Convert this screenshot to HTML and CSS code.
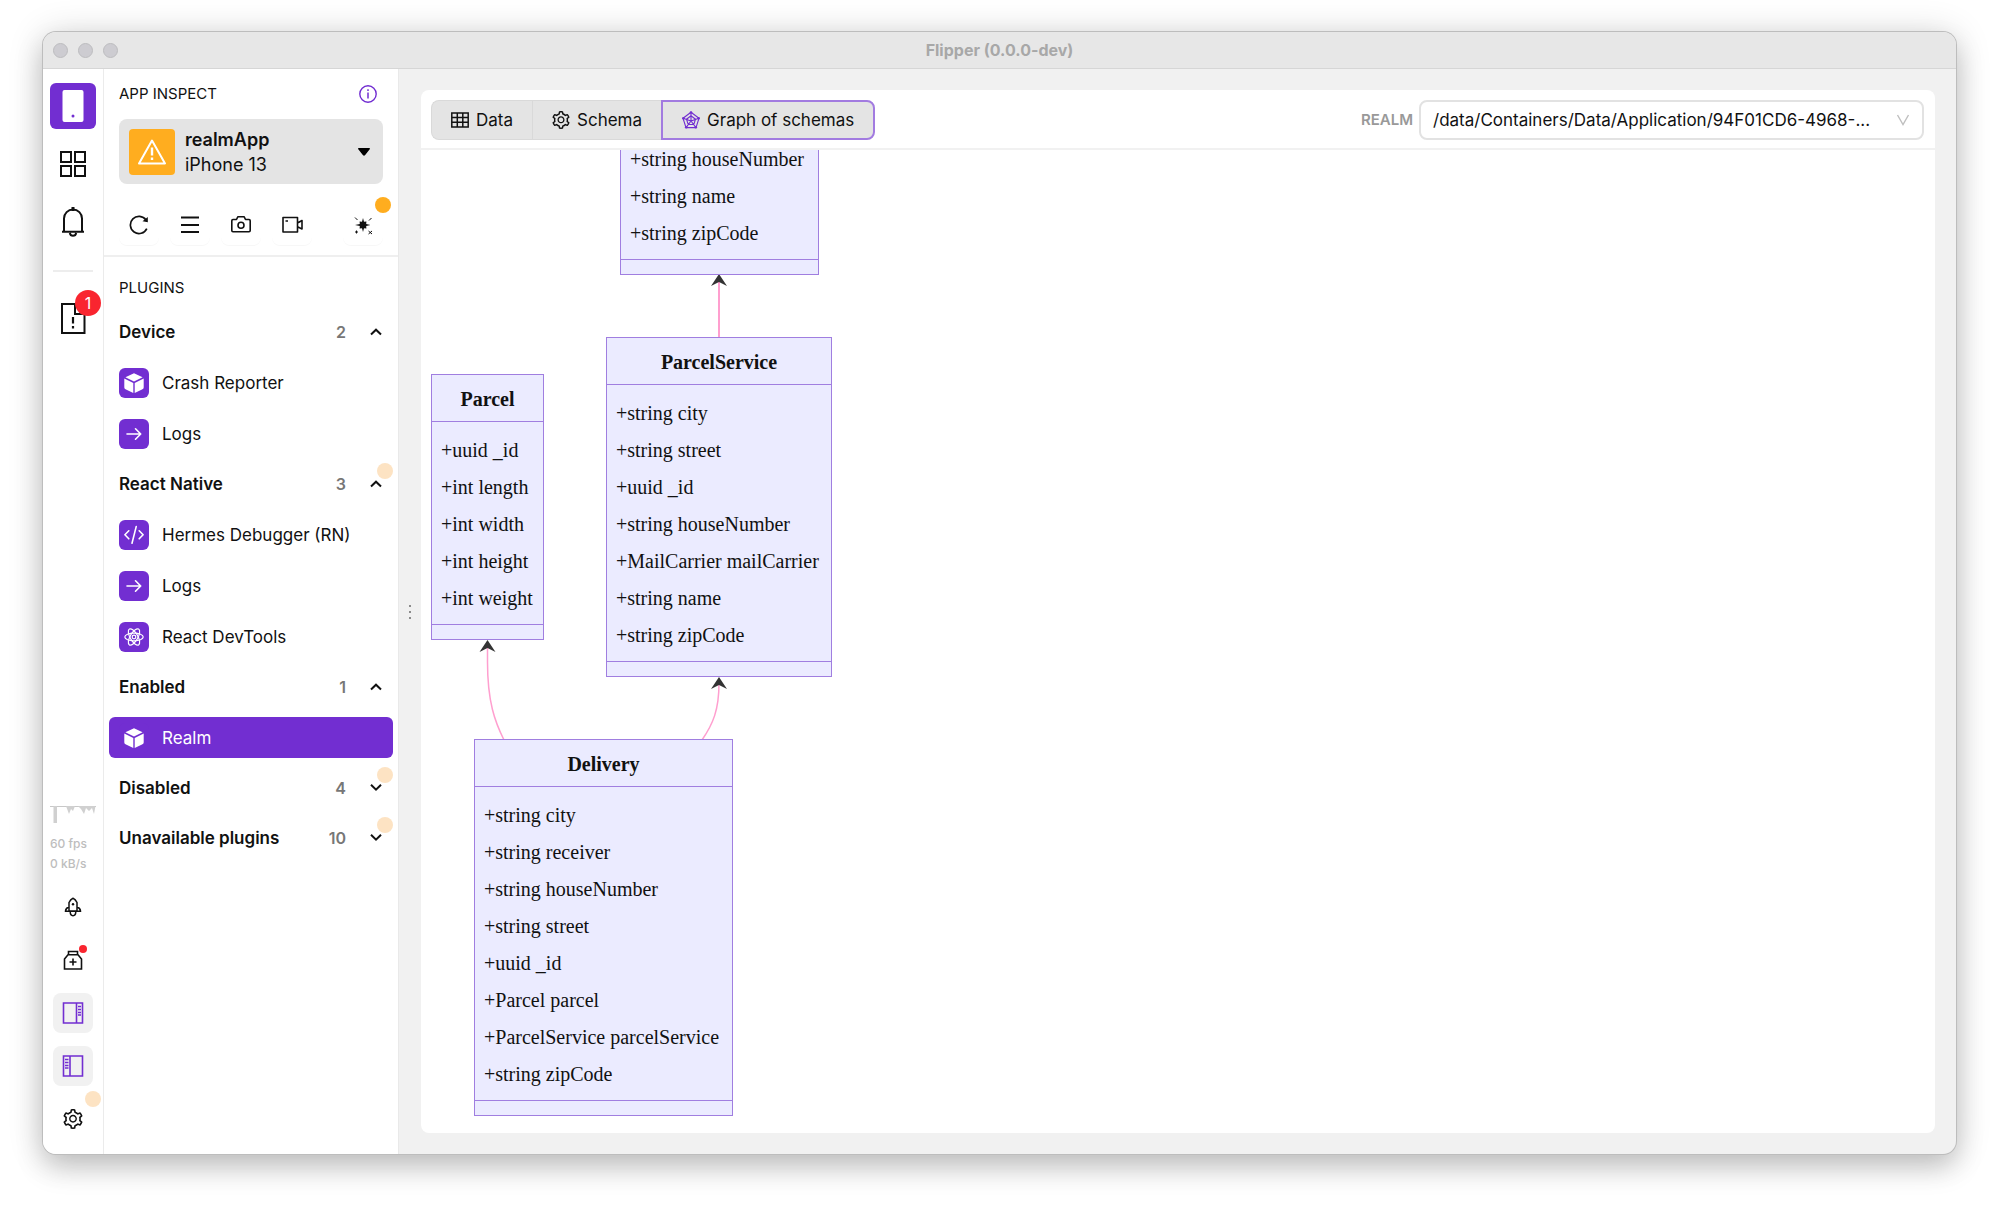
FILE: index.html
```html
<!DOCTYPE html>
<html lang="en">
<head>
<meta charset="utf-8">
<title>Flipper (0.0.0-dev)</title>
<link rel="stylesheet" href="styles.css">
</head>
<body>
<svg class="defs" aria-hidden="true">
  <symbol id="gear" viewBox="64 64 896 896"><path fill="currentColor" d="M924.8 625.7l-65.5-56c3.1-19 4.7-38.4 4.7-57.8s-1.6-38.8-4.7-57.8l65.5-56a32.03 32.03 0 009.3-35.2l-.9-2.6a443.74 443.74 0 00-79.7-137.9l-1.8-2.1a32.12 32.12 0 00-35.1-9.5l-81.3 28.9c-30-24.6-63.5-44-99.7-57.6l-15.7-85a32.05 32.05 0 00-25.8-25.7l-2.7-.5c-52.1-9.4-106.9-9.4-159 0l-2.7.5a32.05 32.05 0 00-25.8 25.7l-15.8 85.4a351.86 351.86 0 00-99 57.4l-81.9-29.1a32 32 0 00-35.1 9.5l-1.8 2.1a446.02 446.02 0 00-79.7 137.9l-.9 2.6c-4.5 12.5-.8 26.5 9.3 35.2l66.3 56.6c-3.1 18.8-4.6 38-4.6 57.1 0 19.2 1.5 38.4 4.6 57.1L99 625.5a32.03 32.03 0 00-9.3 35.2l.9 2.6c18.1 50.4 44.9 96.9 79.7 137.9l1.8 2.1a32.12 32.12 0 0035.1 9.5l81.9-29.1c29.8 24.5 63.1 43.9 99 57.4l15.8 85.4a32.05 32.05 0 0025.8 25.7l2.7.5a449.4 449.4 0 00159 0l2.7-.5a32.05 32.05 0 0025.8-25.7l15.7-85a350 350 0 0099.7-57.6l81.3 28.9a32 32 0 0035.1-9.5l1.8-2.1c34.8-41.1 61.6-87.5 79.7-137.9l.9-2.6c4.5-12.3.8-26.3-9.3-35zM788.3 465.9c2.5 15.1 3.8 30.6 3.8 46.1s-1.3 31-3.8 46.1l-6.6 40.1 74.7 63.9a370.03 370.03 0 01-42.6 73.6L721 702.8l-31.4 25.8c-23.9 19.6-50.5 35-79.3 45.8l-38.1 14.3-17.9 97a377.5 377.5 0 01-85 0l-17.9-97.2-37.8-14.5c-28.5-10.8-55-26.2-78.7-45.7l-31.4-25.9-93.4 33.2c-17-22.9-31.2-47.6-42.6-73.6l75.5-64.5-6.5-40c-2.4-14.9-3.7-30.3-3.7-45.5 0-15.3 1.2-30.6 3.7-45.5l6.5-40-75.5-64.5c11.3-26.1 25.6-50.7 42.6-73.6l93.4 33.2 31.4-25.9c23.7-19.5 50.2-34.9 78.7-45.7l37.9-14.3 17.9-97.2c28.1-3.2 56.8-3.2 85 0l17.9 97 38.1 14.3c28.7 10.8 55.4 26.2 79.3 45.8l31.4 25.8 92.8-32.9c17 22.9 31.2 47.6 42.6 73.6L781.8 426l6.5 39.9zM512 326c-97.2 0-176 78.8-176 176s78.8 176 176 176 176-78.8 176-176-78.8-176-176-176zm79.2 255.2A111.6 111.6 0 01512 614c-29.9 0-58-11.7-79.2-32.8A111.6 111.6 0 01400 502c0-29.9 11.7-58 32.8-79.2C454 401.6 482.1 390 512 390c29.9 0 58 11.6 79.2 32.8A111.6 111.6 0 01624 502c0 29.9-11.7 58-32.8 79.2z"/></symbol>
  <symbol id="cube" viewBox="0 0 20 20"><path fill="#fff" d="M10 0.2 18.6 4.3 10 8.4 1.4 4.3ZM.3 5.6 9.3 9.9V20L2 16.6Q.3 15.8.3 14.5ZM19.7 5.6 10.7 9.9V20L18 16.6Q19.7 15.8 19.7 14.5Z"/></symbol>
  <symbol id="arrow" viewBox="0 0 20 20"><path fill="none" stroke="#fff" stroke-width="1.6" stroke-linecap="round" stroke-linejoin="round" d="M3 10H16.5M11.5 4.8 16.7 10 11.5 15.2"/></symbol>
  <symbol id="code" viewBox="0 0 20 20"><path fill="none" stroke="#fff" stroke-width="1.6" stroke-linecap="round" stroke-linejoin="round" d="M4.8 5.8.9 9.8 4.8 13.8M15.2 5.8 19.1 9.8 15.2 13.8M12.2 1.6 8 18.2"/></symbol>
  <symbol id="react" viewBox="0 0 20 20"><g fill="none" stroke="#fff" stroke-width="1.2"><ellipse cx="10" cy="10" rx="9.2" ry="3.8"/><ellipse cx="10" cy="10" rx="9.2" ry="3.8" transform="rotate(60 10 10)"/><ellipse cx="10" cy="10" rx="9.2" ry="3.8" transform="rotate(120 10 10)"/><circle cx="10" cy="10" r="1.8"/></g></symbol>
  <symbol id="up" viewBox="0 0 12 8"><path fill="none" stroke="currentColor" stroke-width="2" d="M1 6.5 6 1.7 11 6.5"/></symbol>
  <symbol id="down" viewBox="0 0 12 8"><path fill="none" stroke="currentColor" stroke-width="2" d="M1 .8 6 5.6 11 .8"/></symbol>
</svg>

<div class="window">
  <header class="titlebar">
    <span class="lights"><i></i><i></i><i></i></span>
    <h1>Flipper (0.0.0-dev)</h1>
  </header>
  <div class="app">
    <nav class="rail" aria-label="Main">
      <button class="rail-main active" aria-label="App inspect"><svg width="22" height="32" viewBox="0 0 22 32"><rect x=".5" width="21" height="32" rx="2" fill="#fff"/><circle cx="11" cy="26" r="1.5" fill="#722ed1"/></svg></button>
      <button class="rail-main" aria-label="App store"><svg width="26" height="26" viewBox="0 0 26 26"><path fill="none" stroke="currentColor" stroke-width="2" d="M1 1H11V11H1ZM15 1H25V11H15ZM1 15H11V25H1ZM15 15H25V25H15Z"/></svg></button>
      <button class="rail-main" aria-label="Notifications"><svg width="24" height="30" viewBox="0 0 24 30"><path fill="none" stroke="currentColor" stroke-width="2" d="M1 24.8H23M3 24.8V11.500A9 9 0 0 1 21 11.500V24.8M8.800 26C9.500 29.700 14.500 29.700 15.200 26"/><path stroke="currentColor" stroke-width="3" d="M12 0V4"/></svg></button>
      <hr>
      <button class="rail-main alert" aria-label="Error log, 1 error"><svg width="26" height="32" viewBox="0 0 26 32"><path fill="none" stroke="currentColor" stroke-width="2" d="M15 1H2V30H24.500V11H15Z"/><path stroke="currentColor" stroke-width="2.200" d="M13 14V20.500M13 23V25.500"/></svg><b class="count-badge">1</b></button>
      <div class="stats">
        <svg width="46" height="18" viewBox="0 0 46 18"><path fill="none" stroke="#c8c8c8" stroke-width="1" d="M0 .5H46"/><path fill="#d0d0d0" d="M3.500 0H7V17H3.500ZM16 0 19 8 21 3 23 5 25 0ZM28 0 31 3 34 8 36 2 39 5 42 2 44 8 45.500 0Z"/></svg>
        <span>60 fps</span><span>0 kB/s</span>
      </div>
      <div class="rail-bottom">
        <button class="small" aria-label="Changelog"><svg width="18" height="20" viewBox="0 0 18 20"><path fill="none" stroke="currentColor" stroke-width="1.500" d="M5 14V5.500Q6.500 2.200 9 1.200Q11.500 2.200 13 5.500V14ZM5 9.500Q1.500 11.500 1.500 14.200H16.500Q16.500 11.500 13 9.500M6.200 14.500C6.200 20 11.800 20 11.800 14.500"/><circle cx="9" cy="7.200" r="1.200" fill="currentColor"/></svg></button>
        <button class="small" aria-label="Setup doctor"><svg width="20" height="20" viewBox="0 0 20 20"><path fill="none" stroke="currentColor" stroke-width="1.600" d="M1.500 19V9L5 4.800H15L18.500 9V19ZM5.500 4.500V1.500H14.500V4.500M10 8.500V15.500M6.500 12H13.500"/></svg><i class="red-dot"></i></button>
        <button class="small on" aria-label="Right sidebar"><svg width="22" height="22" viewBox="0 0 22 22"><path fill="none" stroke="currentColor" stroke-width="1.600" d="M1.500 1H20.500V21H1.500ZM14.500 1V21M16 4.500H19M16 7.500H19M16 10.500H19M16 13H19"/></svg></button>
        <button class="small on" aria-label="Left sidebar"><svg width="22" height="22" viewBox="0 0 22 22"><path fill="none" stroke="currentColor" stroke-width="1.600" d="M1.500 1H20.500V21H1.500ZM8 1V21M3 4.500H6.500M3 7.500H6.500M3 10.500H6.500M3 13H6.500"/></svg></button>
        <button class="small" aria-label="Settings"><svg width="20" height="20"><use href="#gear"/></svg><i class="dot pale"></i></button>
      </div>
    </nav>

    <aside class="sidebar">
      <div class="inspect">
        <div class="caption"><h2>APP INSPECT</h2>
          <svg width="18" height="18" viewBox="0 0 18 18"><circle cx="9" cy="9" r="8.200" fill="none" stroke="#722ed1" stroke-width="1.400"/><path stroke="#722ed1" stroke-width="1.500" d="M9 7.500V13.500M9 4.300V6"/></svg></div>
        <button class="device">
          <span class="warn"><svg width="28" height="26" viewBox="0 0 28 26"><path fill="none" stroke="#fff" stroke-width="2" stroke-linejoin="round" d="M14 1.500 27 24.500H1Z"/><path stroke="#fff" stroke-width="2.400" d="M14 8.500V16.500M14 18.500V21"/></svg></span>
          <span class="names"><b>realmApp</b><span>iPhone 13</span></span>
          <svg width="12" height="8" viewBox="0 0 12 8"><path d="M.5 0H11.500Q12.300.5 11.500 1.500L7 7.300Q6 8.200 5 7.300L.5 1.500Q-.3.5.5 0Z"/></svg>
        </button>
        <div class="tools">
          <button aria-label="Reload"><svg width="20" height="20" viewBox="0 0 20 20"><path fill="none" stroke="currentColor" stroke-width="1.700" d="M17.800 13.600A8.600 8.600 0 1 1 17 5"/><path fill="currentColor" d="M18.800 2V7.300L13.500 6.200Z"/></svg></button>
          <button aria-label="Menu"><svg width="20" height="20" viewBox="0 0 20 20"><path stroke="currentColor" stroke-width="1.800" d="M1 2.500H19M1 10H19M1 17H19"/></svg></button>
          <button aria-label="Screenshot"><svg width="20" height="20" viewBox="0 0 20 20"><path fill="none" stroke="currentColor" stroke-width="1.600" stroke-linejoin="round" d="M2 4.500H5.500L6.800 1.800H13.200L14.500 4.500H18Q19.200 4.500 19.200 5.700V15.500Q19.200 16.700 18 16.700H2Q.8 16.700.8 15.500V5.700Q.8 4.500 2 4.500Z"/><circle cx="10" cy="10.200" r="3" fill="none" stroke="currentColor" stroke-width="1.600"/></svg></button>
          <button aria-label="Record video"><svg width="21" height="20" viewBox="0 0 21 20"><path fill="none" stroke="currentColor" stroke-width="1.600" stroke-linejoin="round" d="M1 2.500H15.500V17H1ZM15.500 8L20 5.500V14L15.500 11.800M3.500 6H6"/></svg></button>
          <button class="last" aria-label="Performance"><svg width="20" height="20" viewBox="0 0 20 20"><path fill="currentColor" d="M10 3 11 6.800 13.400 6.600 13.200 9 17.500 10 13.200 11 13.400 13.400 11 13.200 10 17 9 13.200 6.600 13.400 6.800 11 2 10 6.800 9 6.600 6.600 9 6.800Z"/><path stroke="currentColor" stroke-width="1" d="M2 2.500 4.500 5M16 5.500 18.500 3M2 17H5M3.500 15.500V18.500M15.500 16 19 19M19 16 15.500 19"/></svg><i class="dot"></i></button>
        </div>
      </div>
      <h2 class="plugins-title">PLUGINS</h2>
      <button class="group"><b>Device</b><em>2</em><svg width="12" height="8"><use href="#up"/></svg></button>
      <a class="plugin" href="#crash"><span class="tile"><svg width="20" height="20"><use href="#cube"/></svg></span>Crash Reporter</a>
      <a class="plugin" href="#logs"><span class="tile"><svg width="20" height="20"><use href="#arrow"/></svg></span>Logs</a>
      <button class="group"><b>React Native</b><em>3</em><svg width="12" height="8"><use href="#up"/></svg><i class="dot pale"></i></button>
      <a class="plugin" href="#hermes"><span class="tile"><svg width="20" height="20"><use href="#code"/></svg></span>Hermes Debugger (RN)</a>
      <a class="plugin" href="#rnlogs"><span class="tile"><svg width="20" height="20"><use href="#arrow"/></svg></span>Logs</a>
      <a class="plugin" href="#devtools"><span class="tile"><svg width="20" height="20"><use href="#react"/></svg></span>React DevTools</a>
      <button class="group"><b>Enabled</b><em>1</em><svg width="12" height="8"><use href="#up"/></svg></button>
      <a class="plugin selected" href="#realm"><span class="tile"><svg width="20" height="20"><use href="#cube"/></svg></span>Realm</a>
      <button class="group"><b>Disabled</b><em>4</em><svg width="12" height="8"><use href="#down"/></svg><i class="dot pale"></i></button>
      <button class="group"><b>Unavailable plugins</b><em>10</em><svg width="12" height="8"><use href="#down"/></svg><i class="dot pale"></i></button>
    </aside>

    <div class="splitter"><i></i><i></i><i></i></div>

    <main class="panel">
      <div class="toolbar">
        <div class="tabs">
          <button><svg width="18" height="16" viewBox="0 0 18 16"><path fill="none" stroke="currentColor" stroke-width="1.500" d="M.8 1H17.200V15H.8ZM.8 5.500H17.200M.8 10.200H17.200M6.300 1V15M11.800 1V15"/></svg>Data</button>
          <button><svg width="18" height="18"><use href="#gear"/></svg>Schema</button>
          <button class="active"><svg width="18" height="18" viewBox="0 0 18 18"><g fill="none" stroke="#722ed1" stroke-width="1.100"><path d="M9 1.200 17 7.200 14 16.600H4L1 7.200Z"/><path d="M9 4.800 13.500 8.200 11.800 13.500H6.200L4.500 8.200ZM9 1.200V10L17 7.200M9 10 14 16.600M9 10 4 16.600M9 10 1 7.200"/></g><g fill="#722ed1"><circle cx="9" cy="1.500" r="1.300"/><circle cx="16.600" cy="7.200" r="1.300"/><circle cx="13.800" cy="16.300" r="1.300"/><circle cx="4.200" cy="16.300" r="1.300"/><circle cx="1.400" cy="7.200" r="1.300"/></g></svg>Graph of schemas</button>
        </div>
        <label for="realm-file">REALM</label>
        <div class="picker">
          <select id="realm-file"><option>/data/Containers/Data/Application/94F01CD6-4968-...</option></select>
          <svg width="14" height="12" viewBox="0 0 14 12"><path fill="none" stroke="#bfbfbf" stroke-width="1.400" d="M1.500 1 7 10.500 12.500 1"/></svg>
        </div>
      </div>
      <div class="canvas">
        <svg class="edges" width="420" height="620" viewBox="0 0 420 620">
          <g fill="none" stroke="#ff9fcf" stroke-width="2"><path d="M298 130V188"/><path stroke-width="1.500" d="M66.500 496V512C66.500 552 74 572 83 590"/><path stroke-width="1.500" d="M298 533C298 560 292 574 281 590"/></g>
          <g fill="#333"><path d="M298 124 306 136 298 132 290 136Z"/><path d="M66.500 490 74.500 502 66.500 498 58.500 502Z"/><path d="M298 527 306 539 298 535 290 539Z"/></g>
        </svg>
        <section class="node mail"><ul><li>+string houseNumber</li><li>+string name</li><li>+string zipCode</li></ul></section>
        <section class="node parcel"><h3>Parcel</h3><ul><li>+uuid _id</li><li>+int length</li><li>+int width</li><li>+int height</li><li>+int weight</li></ul></section>
        <section class="node service"><h3>ParcelService</h3><ul><li>+string city</li><li>+string street</li><li>+uuid _id</li><li>+string houseNumber</li><li>+MailCarrier mailCarrier</li><li>+string name</li><li>+string zipCode</li></ul></section>
        <section class="node delivery"><h3>Delivery</h3><ul><li>+string city</li><li>+string receiver</li><li>+string houseNumber</li><li>+string street</li><li>+uuid _id</li><li>+Parcel parcel</li><li>+ParcelService parcelService</li><li>+string zipCode</li></ul></section>
      </div>
    </main>
  </div>
</div>
</body>
</html>
```
FILE: styles.css
```css
* { box-sizing: border-box; }

body {
  margin: 0;
  min-height: 100vh;
  padding: 32px 43px 55px 43px;
  display: flex;
  background: #fff;
  color: #111;
  font: 17px/24px Inter, "Liberation Sans", sans-serif;
  overflow: hidden;
}

button, select { font: inherit; color: inherit; }
button { padding: 0; border: 0; background: none; }
h1, h2, h3, ul { margin: 0; padding: 0; font: inherit; list-style: none; }
svg { display: block; flex: none; }
.defs { position: absolute; width: 0; height: 0; }

.window {
  flex: 1;
  display: flex;
  flex-direction: column;
  border-radius: 13px;
  background: #f1f1f1;
  box-shadow: 0 0 0 1px #bdbdbd, 0 14px 28px rgba(0, 0, 0, .18), 0 2px 36px rgba(0, 0, 0, .16);
  overflow: hidden;
}

.titlebar {
  display: grid;
  grid-template-columns: 1fr auto 1fr;
  align-items: center;
  height: 37px;
  padding: 0 10px;
  border-bottom: 1px solid #d6d6d6;
  background: #e7e7e7;
}
.titlebar h1 { color: #a8a8a8; font-size: 16px; font-weight: 700; }
.lights { display: flex; gap: 10px; }
.lights i { width: 15px; height: 15px; border: 1px solid #bcbcbf; border-radius: 50%; background: #cdccd1; }

.app { flex: 1; display: flex; }

/* icon rail */
.rail {
  width: 61px;
  display: flex;
  flex-direction: column;
  align-items: center;
  padding: 14px 0 15px;
  border-right: 1px solid #ebebeb;
  background: #fff;
}
.rail button { position: relative; display: grid; place-items: center; }
.rail-main { width: 46px; height: 46px; margin-bottom: 12px; border-radius: 6px; }
.rail-main.active { background: #722ed1; }
.rail hr { width: 40px; margin: 13px 0 24px; border: 0; border-top: 2px solid #ededed; }
.count-badge {
  position: absolute;
  top: -6px;
  right: -5px;
  width: 26px;
  height: 26px;
  border-radius: 50%;
  background: #f9252f;
  color: #fff;
  font-size: 16px;
  font-weight: 400;
  line-height: 26px;
}
.stats { margin-top: auto; width: 46px; display: grid; color: #bdbdbd; font-size: 12px; line-height: 20px; font-weight: 500; }
.stats svg { margin-bottom: 10px; }
.rail-bottom { display: grid; gap: 13px; margin-top: 13px; }
.small { width: 40px; height: 40px; border-radius: 8px; }
.small.on { background: #f1f1f1; color: #722ed1; }
.red-dot { position: absolute; top: 5px; right: 6px; width: 8px; height: 8px; border-radius: 50%; background: #f9252f; }
.dot { position: absolute; width: 16px; height: 16px; border-radius: 50%; background: #ffad1f; }
.dot.pale { background: #fde3c3; }
.small .dot { top: -8px; right: -8px; }

/* sidebar */
.sidebar { width: 294px; display: flex; flex-direction: column; background: #fff; }
.inspect { padding: 13px 15px 10px; border-bottom: 2px solid #efefef; }
.caption { display: flex; justify-content: space-between; align-items: center; height: 24px; padding-right: 6px; }
.caption h2, .plugins-title { font-size: 15px; }
.device {
  display: flex;
  align-items: center;
  gap: 10px;
  width: 100%;
  height: 65px;
  margin-top: 13px;
  padding: 0 13px 0 10px;
  border-radius: 8px;
  background: #e4e4e4;
  text-align: left;
}
.warn { display: grid; place-items: center; width: 46px; height: 46px; border-radius: 4px; background: #ffad1f; }
.names { flex: 1; display: grid; line-height: 25px; font-size: 18px; }
.names b, .group b { font-weight: 600; }
.tools { display: flex; gap: 11px; margin-top: 21px; }
.tools button {
  position: relative;
  display: grid;
  place-items: center;
  width: 40px;
  height: 40px;
  border-radius: 8px;
  box-shadow: 0 1px 0 rgba(0, 0, 0, .03);
}
.tools .last { margin-left: auto; }
.tools .dot { top: -8px; right: -8px; }
.plugins-title { padding: 19px 15px 7px; }
.group { position: relative; display: flex; align-items: center; height: 50px; padding: 0 16px 0 15px; text-align: left; }
.group b { flex: 1; }
.group em { margin-right: 24px; color: #777; font-size: 16px; font-style: normal; font-weight: 600; }
.group .dot { top: 4px; right: 5px; }
.plugin {
  display: flex;
  align-items: center;
  gap: 13px;
  height: 41px;
  margin: 5px;
  padding: 0 10px;
  border-radius: 6px;
  color: inherit;
  text-decoration: none;
}
.tile { display: grid; place-items: center; width: 30px; height: 30px; border-radius: 6px; background: #722ed1; }
.plugin.selected { background: #722ed1; color: #fff; }

.splitter { width: 23px; display: flex; flex-direction: column; align-items: center; justify-content: center; gap: 4px; border-left: 1px solid #e9e9e9; }
.splitter i { width: 2px; height: 2px; background: #8c8c8c; }

/* main panel */
.panel { flex: 1; min-width: 0; display: flex; flex-direction: column; margin: 21px 21px 21px 0; border-radius: 8px; background: #fff; overflow: hidden; }
.toolbar { display: flex; align-items: center; height: 60px; padding: 2px 11px 0 10px; border-bottom: 2px solid #f1f1f1; }
.tabs { display: flex; margin-right: auto; }
.tabs button {
  display: flex;
  align-items: center;
  gap: 7px;
  height: 40px;
  padding: 0 19px;
  border: 1px solid #d9d9d9;
  border-right-width: 0;
  background: #e4e4e4;
}
.tabs button:first-child { border-radius: 8px 0 0 8px; }
.tabs .active { border: 2px solid #a27be0; border-radius: 0 8px 8px 0; }
.toolbar label { margin-right: 6px; color: #999; font-size: 15px; font-weight: 600; }
.picker { position: relative; width: 505px; }
.picker select { display: block; width: 100%; height: 40px; padding: 0 40px 0 12px; border: 2px solid #e2e2e2; border-radius: 8px; background: #fff; appearance: none; }
.picker svg { position: absolute; top: 14px; right: 14px; pointer-events: none; }

/* class diagram */
.canvas { position: relative; flex: 1; overflow: hidden; }
.edges { position: absolute; left: 0; top: 0; }
.node { position: absolute; border: 1px solid #a07ee0; background: #ebebff; font: 20px/37px "Liberation Serif", serif; white-space: nowrap; }
.node h3 { height: 47px; border-bottom: 1px solid #a07ee0; font-weight: 700; line-height: 48px; text-align: center; }
.node ul { padding: 10px 8px 7px 9px; }
.node::after { content: ""; display: block; height: 14px; border-top: 1px solid #a07ee0; }
.mail { left: 199px; top: -20px; width: 199px; }
.parcel { left: 10px; top: 224px; width: 113px; }
.service { left: 185px; top: 187px; width: 226px; }
.delivery { left: 53px; top: 589px; width: 259px; }
```
